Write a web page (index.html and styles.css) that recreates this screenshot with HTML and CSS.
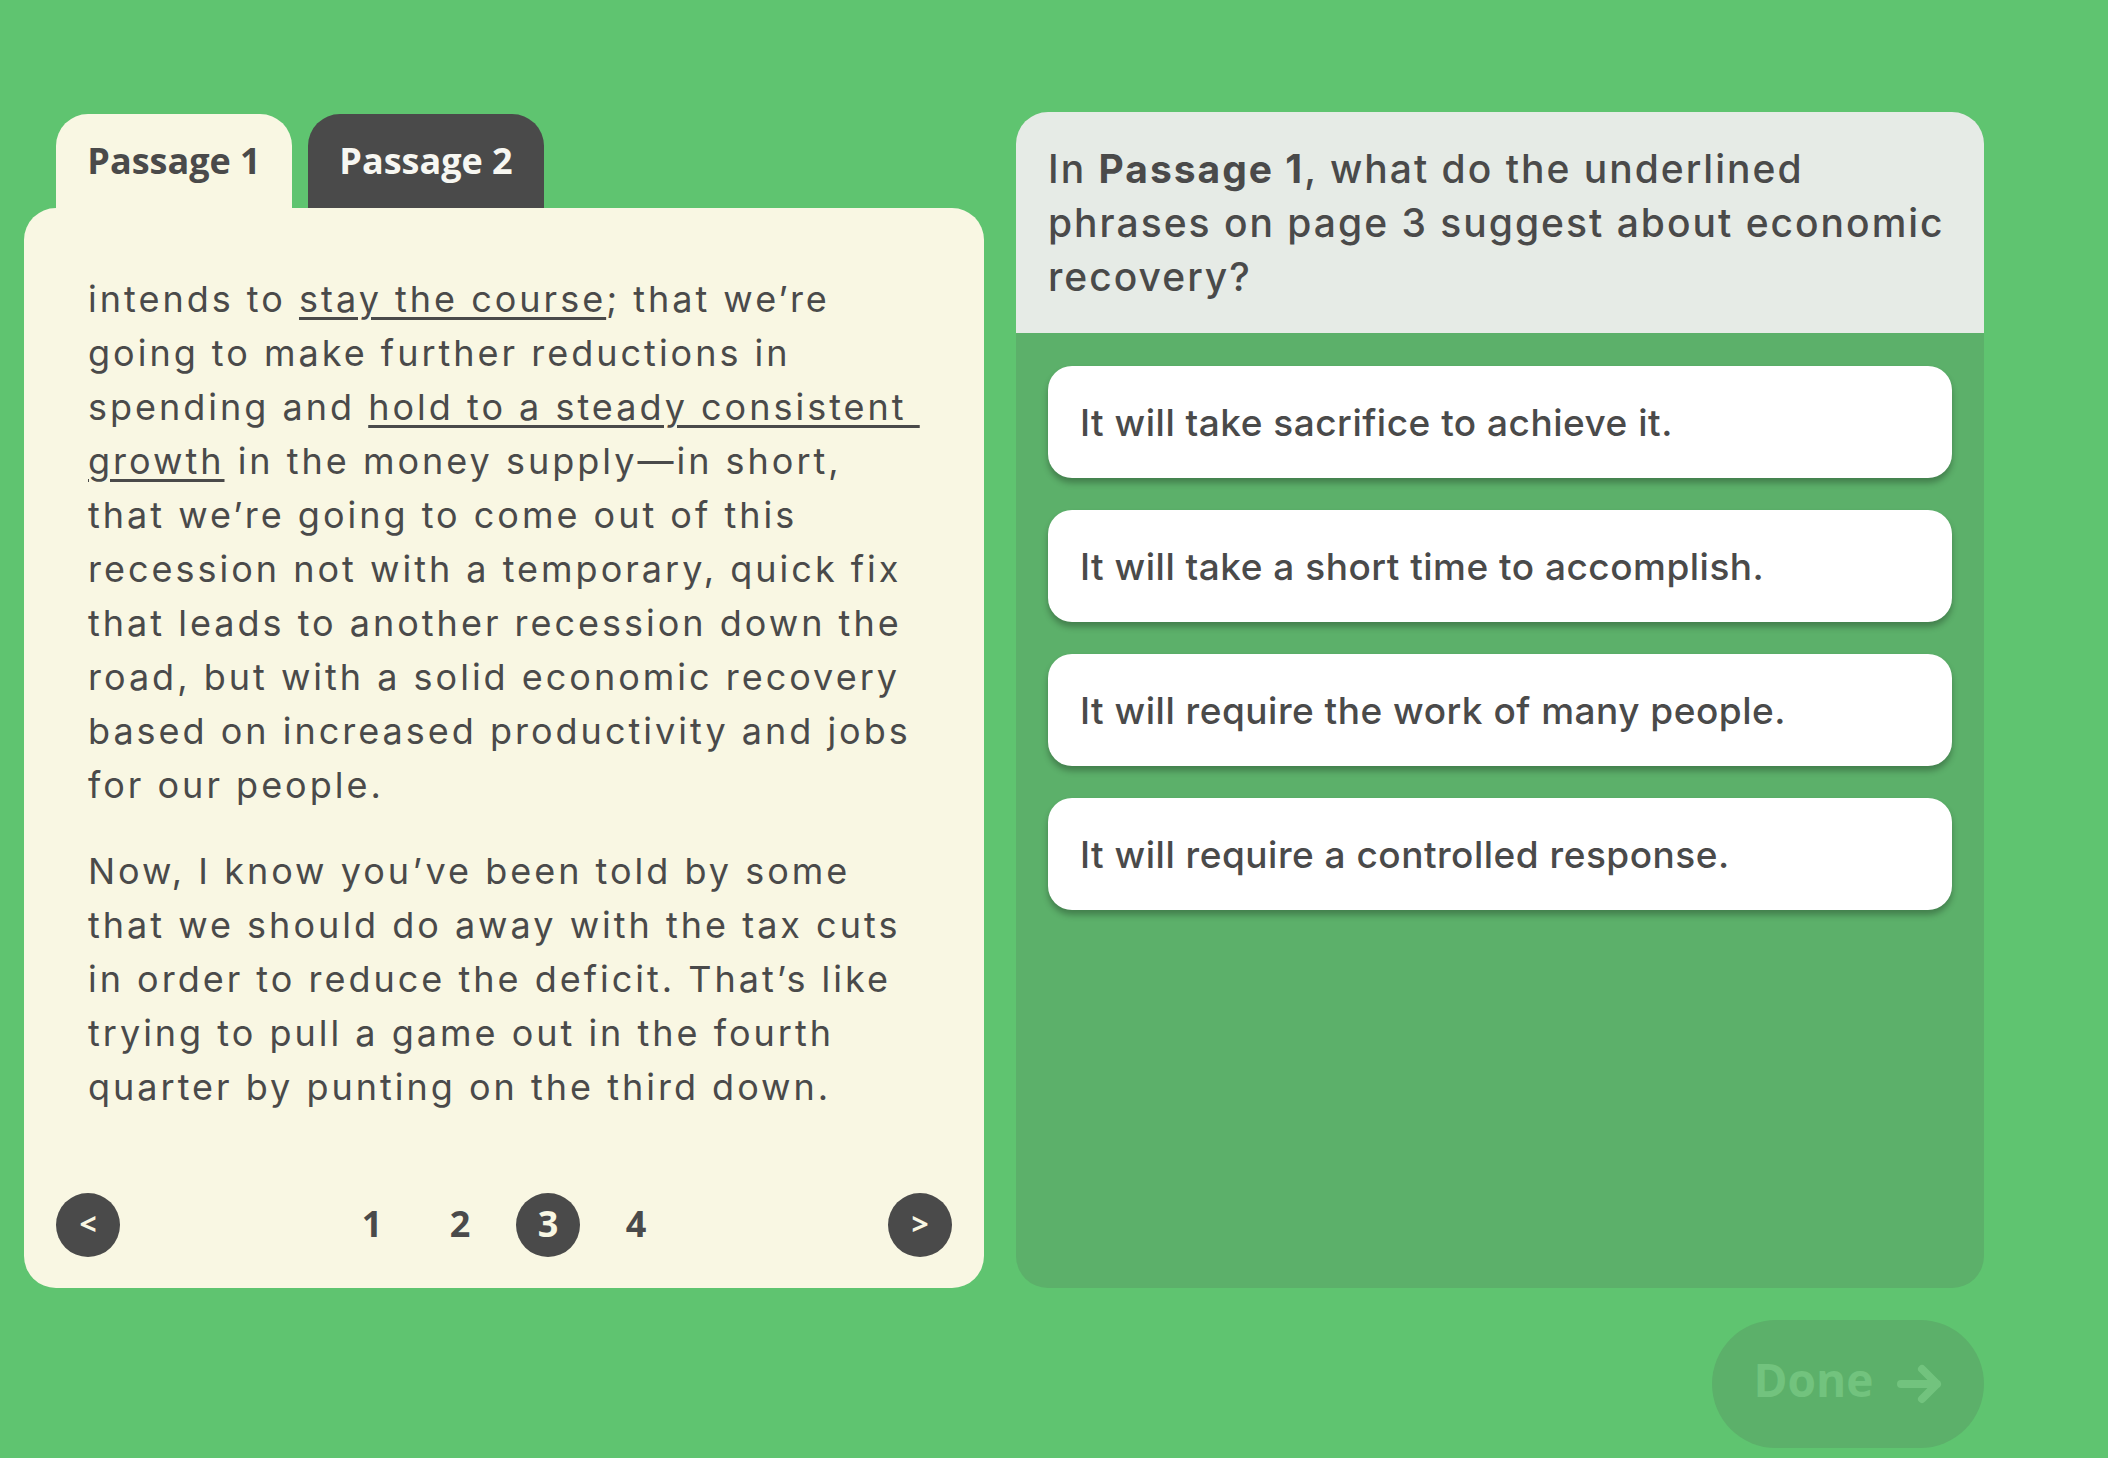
FILE: index.html
```html
<!DOCTYPE html>
<html lang="en">
<head>
<meta charset="utf-8">
<title>Passage question</title>
<link rel="stylesheet" href="styles.css">
</head>
<body>
<div class="page">
  <div class="main">
    <section class="left">
      <div class="tabs">
        <div class="tab tab-active">Passage 1</div>
        <div class="tab tab-dark">Passage 2</div>
      </div>
      <div class="card">
        <div class="passage">
          <p>intends to <u>stay the course</u>; that we’re<br>going to make further reductions in<br>spending and <u>hold to a steady consistent&nbsp;<br>growth</u> in the money supply—in short,<br>that we’re going to come out of this<br>recession not with a temporary, quick fix<br>that leads to another recession down the<br>road, but with a solid economic recovery<br>based on increased productivity and jobs<br>for our people.</p>
          <p>Now, I know you’ve been told by some<br>that we should do away with the tax cuts<br>in order to reduce the deficit. That’s like<br>trying to pull a game out in the fourth<br>quarter by punting on the third down.</p>
        </div>
        <div class="pager">
          <div class="circle">&lt;</div>
          <div class="pages">
            <div class="pg">1</div>
            <div class="pg">2</div>
            <div class="pg pg-current">3</div>
            <div class="pg">4</div>
          </div>
          <div class="circle">&gt;</div>
        </div>
      </div>
    </section>
    <section class="panel">
      <div class="question">In <b>Passage 1</b>, what do the underlined<br>phrases on page 3 suggest about economic<br>recovery?</div>
      <div class="options">
        <div class="option">It will take sacrifice to achieve it.</div>
        <div class="option">It will take a short time to accomplish.</div>
        <div class="option">It will require the work of many people.</div>
        <div class="option">It will require a controlled response.</div>
      </div>
    </section>
  </div>
  <div class="footer">
    <div class="done"><span class="done-label">Done</span>
      <svg class="arrow" width="45" height="40" viewBox="0 0 45 40"><path d="M4 20 H40 M25 5 L40 20 L25 35" fill="none" stroke="currentColor" stroke-width="8" stroke-linecap="round" stroke-linejoin="round"/></svg>
    </div>
  </div>
</div>
</body>
</html>
```

FILE: styles.css
```css
html, body {
  margin: 0;
  padding: 0;
}
body {
  background: #5fc470;
  width: 2108px;
  height: 1458px;
  overflow: hidden;
  color: #4a4a4a;
  font-family: Inter, "Noto Sans", sans-serif;
}
.page {
  padding: 112px 0 0 24px;
  width: 1960px;
}
.main {
  display: grid;
  grid-template-columns: 960px 968px;
  column-gap: 32px;
  height: 1176px;
}
.left {
  display: flex;
  flex-direction: column;
}
.tabs {
  display: flex;
  gap: 16px;
  padding: 2px 0 0 32px;
}
.tab {
  width: 236px;
  height: 94px;
  box-sizing: border-box;
  border-radius: 32px 32px 0 0;
  display: flex;
  align-items: center;
  justify-content: center;
  padding-bottom: 2px;
  font-family: "Open Sans", sans-serif;
  font-weight: 700;
  font-size: 36px;
}
.tab-active {
  background: #f9f7e3;
  color: #4a4a4a;
}
.tab-dark {
  background: #4a4a4a;
  color: #f7f7f2;
}
.card {
  flex: 1;
  background: #f9f7e3;
  border-radius: 32px;
  padding: 64px 32px 31px;
  display: flex;
  flex-direction: column;
}
.passage {
  flex: 1;
  padding: 0 32px;
  font-size: 36px;
  line-height: 54px;
  letter-spacing: 3px;
}
.passage p {
  margin: 0 0 32px;
  white-space: nowrap;
}
.passage u {
  text-decoration-thickness: 3px;
  text-underline-offset: 5px;
}
.pager {
  display: flex;
  align-items: center;
  justify-content: space-between;
  height: 64px;
}
.circle, .pg {
  width: 64px;
  height: 64px;
  box-sizing: border-box;
  border-radius: 50%;
  display: flex;
  align-items: center;
  justify-content: center;
  padding-bottom: 3px;
  font-family: "Open Sans", sans-serif;
  font-weight: 700;
  font-size: 36px;
}
.circle {
  background: #4a4a4a;
  color: #f9f7e3;
  font-size: 30px;
}
.pages {
  display: flex;
  gap: 24px;
}
.pg-current {
  background: #4a4a4a;
  color: #f9f7e3;
}
.panel {
  background: #5cb06a;
  border-radius: 32px;
  overflow: hidden;
}
.question {
  background: #e6ebe6;
  padding: 30px 32px 29px;
  font-size: 39px;
  line-height: 54px;
  font-weight: 500;
  letter-spacing: 2px;
  white-space: nowrap;
}
.question b {
  font-weight: 700;
}
.options {
  padding: 33px 32px;
  display: flex;
  flex-direction: column;
  gap: 32px;
}
.option {
  height: 112px;
  box-sizing: border-box;
  background: #ffffff;
  border-radius: 24px;
  padding: 0 32px;
  display: flex;
  align-items: center;
  font-size: 37px;
  font-weight: 500;
  letter-spacing: 0.5px;
  box-shadow: 0 5px 6px rgba(0, 0, 0, 0.28);
}
.footer {
  display: flex;
  justify-content: flex-end;
  margin-top: 32px;
}
.done {
  width: 272px;
  height: 128px;
  box-sizing: border-box;
  border-radius: 64px;
  background: #5cb06a;
  color: #72c37e;
  display: flex;
  align-items: center;
  justify-content: center;
  gap: 24px;
  font-family: "Open Sans", sans-serif;
  font-weight: 700;
  font-size: 46px;
}
.done-label {
  margin-bottom: 10px;
}
.arrow {
  display: block;
}
```
